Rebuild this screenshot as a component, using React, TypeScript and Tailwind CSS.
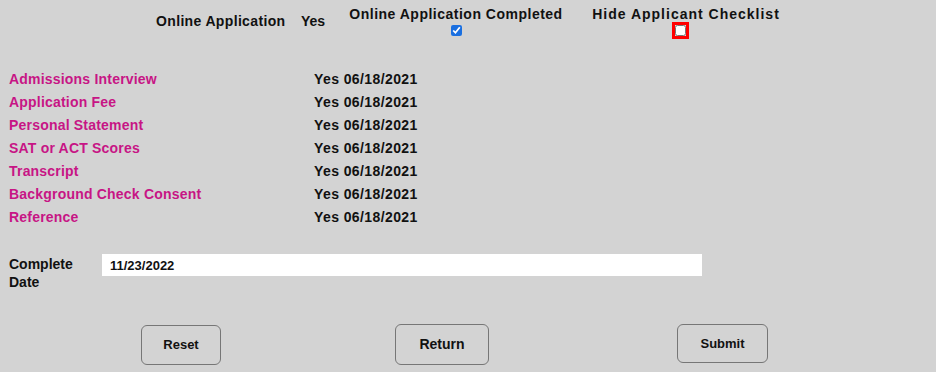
import { useState } from "react";

const items = [
  "Admissions Interview",
  "Application Fee",
  "Personal Statement",
  "SAT or ACT Scores",
  "Transcript",
  "Background Check Consent",
  "Reference",
];

const gothic = "font-['Century_Gothic','URW_Gothic','Liberation_Sans',sans-serif]";

export default function App() {
  const [hide, setHide] = useState(false);
  const [date, setDate] = useState("11/23/2022");

  return (
    <div className={`w-[936px] h-[372px] bg-[#d3d3d3] text-[14px] font-bold text-[#111] overflow-hidden ${gothic}`}>
      {/* header row */}
      <div className="flex h-[46px] pt-[5px]">
        <div className="w-[156px]" />
        <div className="w-[145px] pt-[7px] leading-[18px] tracking-[0.35px]">Online Application</div>
        <div className="w-[39px] pt-[7px] leading-[18px]">Yes</div>
        <div className="w-[232px] flex flex-col items-center leading-[18px]">
          <span className="tracking-[0.5px]">Online Application Completed</span>
          <input
            type="checkbox"
            checked
            readOnly
            className="mt-[2px] w-[11px] h-[11px] accent-[#1a6fe0]"
          />
        </div>
        <div className="w-[228px] flex flex-col items-center leading-[18px]">
          <span className="tracking-[1px]">Hide Applicant Checklist</span>
          <span className="-ml-[12px] -mt-[1px] border-[3px] border-[#ff0000] w-[17px] h-[17px] flex items-center justify-center">
            <input
              type="checkbox"
              checked={hide}
              onChange={e => setHide(e.target.checked)}
              className="w-[11px] h-[11px] m-0"
            />
          </span>
        </div>
      </div>

      {/* checklist items */}
      <div className="mt-[22px] pl-[9px] grid grid-cols-[305px_1fr] leading-[23px]">
        {items.map(it => (
          <div key={it} className="contents">
            <div className="text-[#c71585] tracking-[0.2px]">{it}</div>
            <div className="tracking-[0.4px]">Yes 06/18/2021</div>
          </div>
        ))}
      </div>

      {/* complete date */}
      <div className="flex mt-[25px] pl-[9px]">
        <div className="w-[93px] leading-[18px] pt-[1px]">
          Complete
          <br />
          Date
        </div>
        <input
          value={date}
          onChange={e => setDate(e.target.value)}
          className="w-[600px] h-[22px] bg-white px-[8px] text-[13px] font-bold font-['Liberation_Sans',Arial,sans-serif] outline-none"
        />
      </div>

      {/* buttons */}
      <div className="flex items-start mt-[33px] font-['Liberation_Sans',Arial,sans-serif] text-[13px]">
        <div className="w-[141px]" />
        <button className="w-[80px] h-[40px] mt-[1px] rounded-[6px] border border-[#767676] bg-[#d3d3d3]">
          Reset
        </button>
        <div className="w-[174px]" />
        <button className="w-[94px] h-[41px] rounded-[6px] border border-[#767676] bg-[#d3d3d3] text-[14px]">
          Return
        </button>
        <div className="w-[188px]" />
        <button className="w-[91px] h-[39px] rounded-[6px] border border-[#767676] bg-[#d3d3d3]">
          Submit
        </button>
      </div>
    </div>
  );
}
